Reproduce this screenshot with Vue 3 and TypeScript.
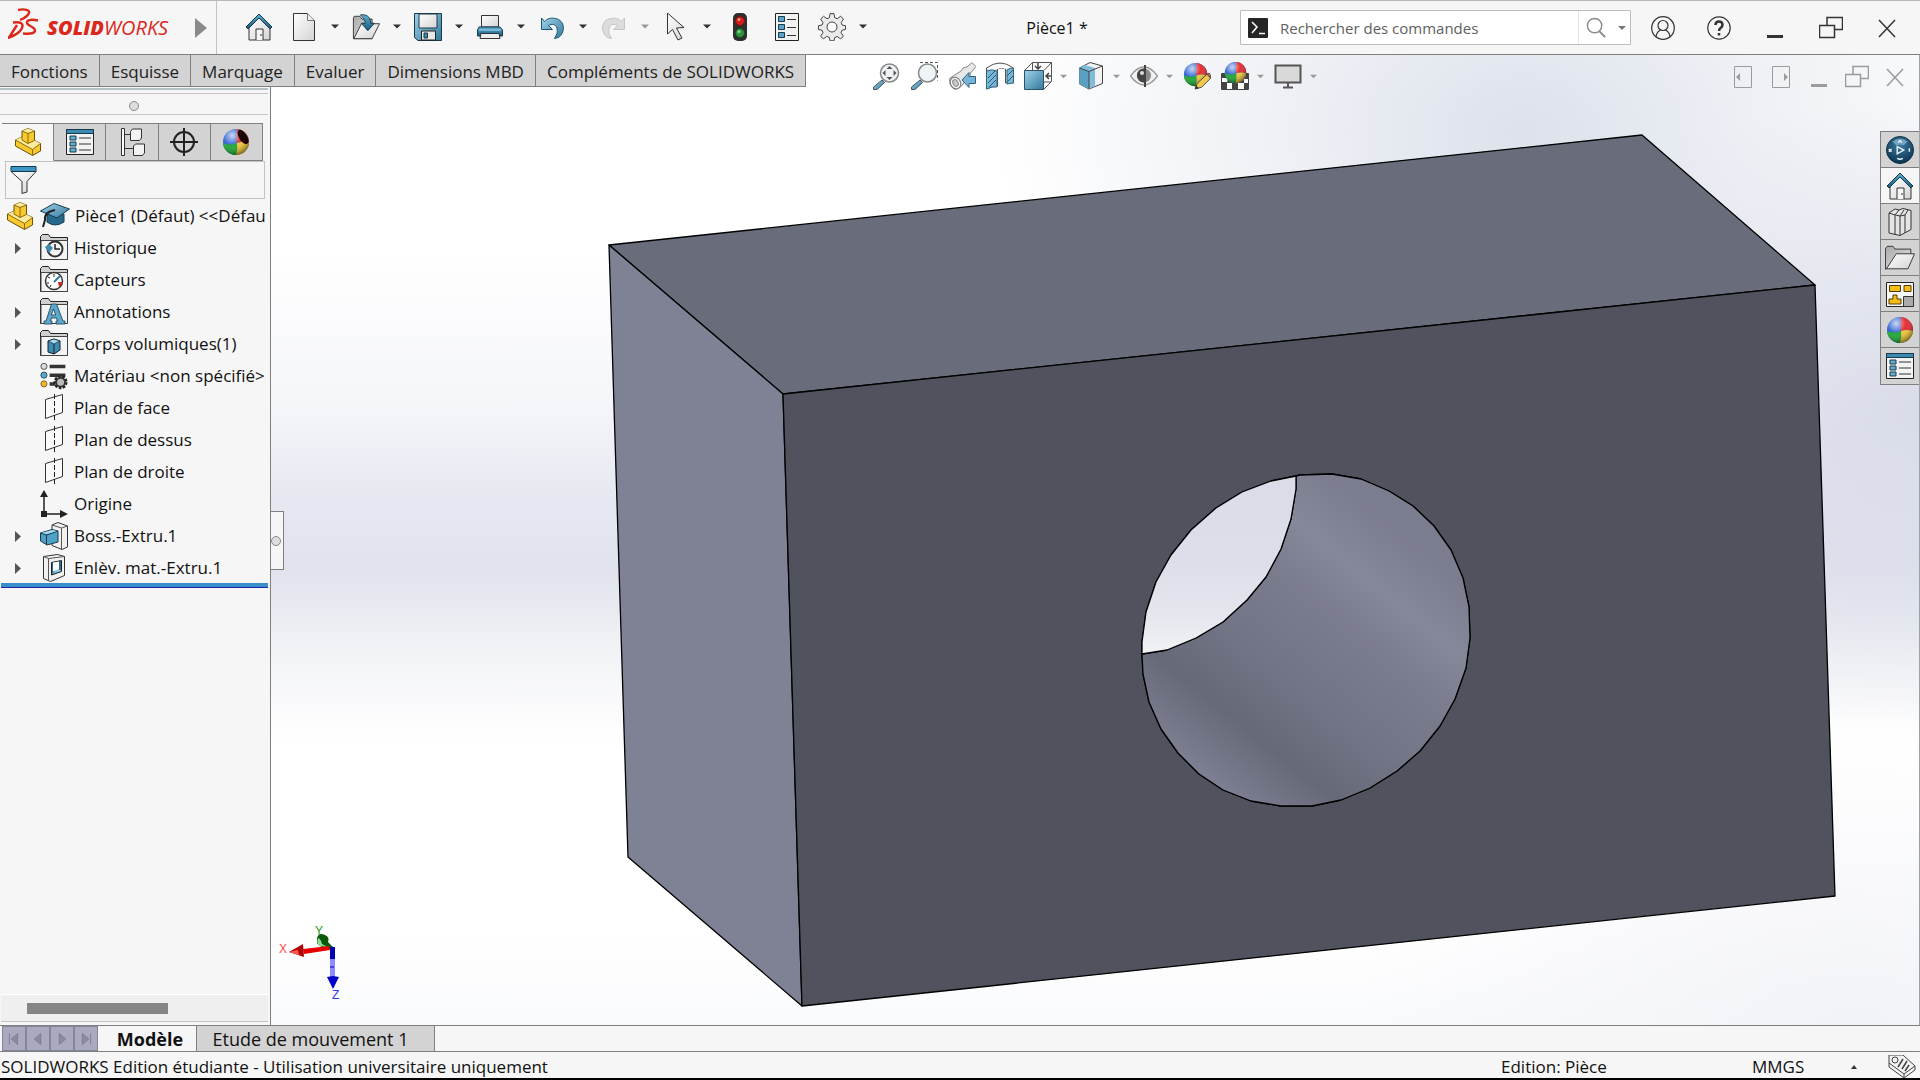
<script setup lang="ts">
import { ref } from 'vue'

interface Tool {
  icon: string
  label: string
  menu?: boolean
  dim?: boolean
}

interface TreeNode {
  icon: string
  label: string
  open?: boolean
}

const query = ref('')
const filter = ref('')

const mainTools: Tool[] = [
  { icon: 'new', label: 'Nouveau', menu: true },
  { icon: 'open', label: 'Ouvrir', menu: true },
  { icon: 'save', label: 'Enregistrer', menu: true },
  { icon: 'print', label: 'Imprimer', menu: true },
  { icon: 'undo', label: 'Annuler', menu: true },
  { icon: 'redo', label: 'Rétablir', menu: true, dim: true },
  { icon: 'pointer', label: 'Sélectionner', menu: true },
]

const commandTabs = ['Fonctions', 'Esquisse', 'Marquage', 'Evaluer', 'Dimensions MBD', 'Compléments de SOLIDWORKS']

const viewTools: Tool[] = [
  { icon: 'zoomfit', label: 'Zoom au mieux' },
  { icon: 'zoomarea', label: 'Zoom fenêtre' },
  { icon: 'prevview', label: 'Vue précédente' },
  { icon: 'section', label: 'Vue en coupe' },
  { icon: 'orient', label: 'Orientation de la vue', menu: true },
  { icon: 'style', label: "Style d'affichage", menu: true },
  { icon: 'eye', label: 'Cacher/Montrer', menu: true },
  { icon: 'appearance', label: "Editer l'apparence" },
  { icon: 'scene', label: 'Appliquer une scène', menu: true },
  { icon: 'monitor', label: "Paramètres d'affichage", menu: true },
]

const panelTabs: Tool[] = [
  { icon: 'part', label: 'Arbre de création' },
  { icon: 'props', label: 'Propriétés' },
  { icon: 'config', label: 'Configurations' },
  { icon: 'target', label: 'DimXpert' },
  { icon: 'display', label: 'Affichage' },
]

const tree: TreeNode[] = [
  { icon: 'history', label: 'Historique', open: true },
  { icon: 'sensor', label: 'Capteurs' },
  { icon: 'annot', label: 'Annotations', open: true },
  { icon: 'solid', label: 'Corps volumiques(1)', open: true },
  { icon: 'material', label: 'Matériau <non spécifié>' },
  { icon: 'plane', label: 'Plan de face' },
  { icon: 'plane', label: 'Plan de dessus' },
  { icon: 'plane', label: 'Plan de droite' },
  { icon: 'origin', label: 'Origine' },
  { icon: 'boss', label: 'Boss.-Extru.1', open: true },
  { icon: 'cut', label: 'Enlèv. mat.-Extru.1', open: true },
]

const taskPane: Tool[] = [
  { icon: 'wheel', label: '3DEXPERIENCE' },
  { icon: 'home', label: 'Ressources' },
  { icon: 'library', label: 'Bibliothèque' },
  { icon: 'folder', label: 'Explorateur' },
  { icon: 'palette', label: 'Palette de vues' },
  { icon: 'ball', label: 'Apparences' },
  { icon: 'props', label: 'Propriétés personnalisées' },
]

const navIcons: Tool[] = [
  { icon: 'first', label: 'Premier' },
  { icon: 'prev', label: 'Précédent' },
  { icon: 'next', label: 'Suivant' },
  { icon: 'last', label: 'Dernier' },
]
</script>

<template>
  <div class="app">
    <svg class="sprite" width="0" height="0" aria-hidden="true">
      <defs>
        <linearGradient id="gBlue" x1="0" y1="0" x2="1" y2="1">
          <stop offset="0" stop-color="#9fd3ea" /><stop offset="1" stop-color="#33789b" />
        </linearGradient>
        <linearGradient id="gDeep" x1="0" y1="0" x2="0" y2="1">
          <stop offset="0" stop-color="#5fb0d2" /><stop offset="1" stop-color="#17577a" />
        </linearGradient>
        <linearGradient id="gGrey" x1="0" y1="0" x2="1" y2="1">
          <stop offset="0" stop-color="#ffffff" /><stop offset="1" stop-color="#d4d4d4" />
        </linearGradient>
        <linearGradient id="gSteel" x1="0" y1="0" x2="1" y2="1">
          <stop offset="0" stop-color="#a9a9a9" /><stop offset="1" stop-color="#e6e6e6" />
        </linearGradient>
        <radialGradient id="gShine" cx="0.35" cy="0.25" r="0.75">
          <stop offset="0" stop-color="#fff" stop-opacity="0.75" />
          <stop offset="0.5" stop-color="#fff" stop-opacity="0.05" />
          <stop offset="1" stop-color="#000" stop-opacity="0.4" />
        </radialGradient>
        <radialGradient id="gWheel" cx="0.5" cy="0.3" r="0.7">
          <stop offset="0" stop-color="#3f7da3" /><stop offset="1" stop-color="#0b3350" />
        </radialGradient>
      </defs>

      <symbol id="home" viewBox="0 0 28 28">
        <path d="M4 13v14h21V13L14 4z" fill="url(#gGrey)" stroke="#333" />
        <path d="M1 14 14 1l13 13-2 2L14 5 3 16z" fill="url(#gDeep)" stroke="#173a4c" />
        <path d="M11 27V16h7v11M16 21v2" fill="#f6f6f6" stroke="#333" />
      </symbol>
      <symbol id="new" viewBox="0 0 28 28">
        <path d="M3.5.5h14l7 7v20h-21z" fill="url(#gGrey)" stroke="#333" />
        <path d="M17.500.5v7h7" fill="#eee" stroke="#777" />
      </symbol>
      <symbol id="open" viewBox="0 0 30 28">
        <path d="M1.500 26.500V4.500l1-2h6l2 3h11v21z" fill="url(#gSteel)" stroke="#333" />
        <path d="M2 26.500 10 10.500h19.500l-8 16z" fill="url(#gGrey)" stroke="#333" />
        <path d="M9 1c6-1 11 2 11 9h4l-7 8-7-8h4c0-3-1-5-5-9z" fill="url(#gDeep)" stroke="#173a4c" />
      </symbol>
      <symbol id="save" viewBox="0 0 28 28">
        <path d="M.5.5h27v27H4l-3.500-3z" fill="url(#gBlue)" stroke="#173a4c" />
        <path d="M5 1h18v14H5z" fill="url(#gGrey)" stroke="#173a4c" />
        <path d="M7.500 27v-9h14v9z" fill="#e8e8e8" stroke="#222" />
        <path d="M10 20h3.500v5H10z" fill="#3f86a9" stroke="#173a4c" />
      </symbol>
      <symbol id="print" viewBox="0 0 28 28">
        <path d="M5.500 14V2.500h17V14z" fill="url(#gGrey)" stroke="#333" />
        <path d="M3 14h21l2.500 3v6h-25v-6z" fill="url(#gDeep)" stroke="#173a4c" />
        <path d="M3 17h22" stroke="#a9dcf0" /><path d="M5 20.500h18l1 5H4z" fill="#eee" stroke="#333" />
      </symbol>
      <symbol id="undo" viewBox="0 0 28 28">
        <path d="M3.500 5v11.500h11l-4-4c5-3 10 0 8.500 8l-2.500 5 4-1c7-5 7-17-3-19-5-1-8 0-11 3z" fill="url(#gBlue)" stroke="#1e5672" />
      </symbol>
      <symbol id="redo" viewBox="0 0 28 28">
        <path d="M24.500 5v11.500h-11l4-4c-5-3-10 0-8.500 8l2.500 5-4-1c-7-5-7-17 3-19 5-1 8 0 11 3z" fill="#dcdcdc" stroke="#c4c4c4" />
      </symbol>
      <symbol id="pointer" viewBox="0 0 28 28">
        <path d="M5.500 0v21l5-4.500 5.500 10.500 4-2-5.500-10 7.500-.5z" fill="url(#gGrey)" stroke="#333" />
      </symbol>
      <symbol id="traffic" viewBox="0 0 28 28">
        <rect x="7" y="0" width="14" height="28" rx="5" fill="#2e2e2e" />
        <circle cx="14" cy="8" r="4.500" fill="#d2201c" stroke="#7a1210" /><circle cx="14" cy="20" r="4.500" fill="#2f9440" stroke="#14521e" />
        <circle cx="13" cy="6.500" r="1.500" fill="#f08a84" /><circle cx="13" cy="18.500" r="1.500" fill="#8ed093" />
      </symbol>
      <symbol id="list" viewBox="0 0 28 28">
        <path d="M2.500.5h23v27h-23z" fill="#f2f2f2" stroke="#222" />
        <path d="M5.500 3.500h6v5h-6zM5.500 11.500h6v5h-6zM5.500 19.500h6v5h-6z" fill="#5aa5c8" stroke="#173a4c" />
        <path d="M14 6.500h9M14 14.500h9M14 22.500h9" stroke="#333" />
      </symbol>
      <symbol id="gear" viewBox="0 0 28 28">
        <path d="M12 .7h4l.7 4 2.500 1 3.500-2.400 2.800 2.800-2.300 3.500 1 2.500 3.300.6v3.800l-3.500.8-1 2.400 2.400 3.400-2.800 2.800-3.400-2.400-2.500 1-.7 3.300h-4l-.7-3.400-2.500-1-3.400 2.500-2.800-2.800L5 19.700l-1-2.400-3.500-.8v-3.800L4 12l1-2.500-2.300-3.400 2.800-2.800L9 5.700l2.400-1z" fill="#eaeaea" stroke="#444" />
        <circle cx="14" cy="14" r="5" fill="#fff" stroke="#444" />
      </symbol>
      <symbol id="caret" viewBox="0 0 8 5"><path d="M0 .5h8L4 4.500z" fill="currentColor" /></symbol>

      <symbol id="glass" viewBox="0 0 28 28">
        <path d="m10 18 2.500 2.500L5 27.500H1.500V25z" fill="url(#gBlue)" stroke="#456" />
        <circle cx="17.500" cy="11" r="9" fill="#eef3f6" stroke="#888" stroke-width="1.500" />
      </symbol>
      <symbol id="zoomfit" viewBox="0 0 28 28">
        <use href="#glass" /><path d="M17.500 4l3 3h-6zM17.500 18l3-3h-6zM10.500 11l3-3v6zM24.500 11l-3-3v6z" fill="#555" />
      </symbol>
      <symbol id="zoomarea" viewBox="0 0 28 28">
        <use href="#glass" /><path d="M10 .5h17.500v18" fill="none" stroke="#555" stroke-dasharray="3 2" />
      </symbol>
      <symbol id="prevview" viewBox="0 0 28 28">
        <path d="M2 16 13 9l2-3 4-1 5-4.500 4 4-5 6-1 3-9 11-6 3q-7-4-5-11.500z" fill="#e8e8e8" stroke="#888" />
        <ellipse cx="7.500" cy="21" rx="5" ry="6" fill="#f8f8f8" stroke="#777" transform="rotate(-30 7.500 21)" /><ellipse cx="7.500" cy="21" rx="2.500" ry="3.500" fill="#c9c9c9" stroke="#888" transform="rotate(-30 7.500 21)" />
        <path d="M27.500 14.500v7H21v4l-7-7.500 7-7.500v4z" fill="#77b5d6" stroke="#2e6583" />
      </symbol>
      <symbol id="section" viewBox="0 0 28 28">
        <path d="M.5 6q13.500-10 27 0v15q-3-2-8 0V7q-4-2-8 0v17q-4 0-11 3z" fill="#e4e4e4" stroke="#555" />
        <path d="M1 7q13-10 26 0-6-2-8 0-3-2-7 0-6-1-11 0z" fill="#fff" />
        <path d="M.5 9q5-2 10.500 0v16q-5-1-10.500 2z" fill="#7ab7d6" stroke="#2e6583" /><path d="M21 8q3-2 6.500-2v15l-6.500 1z" fill="#7ab7d6" stroke="#2e6583" />
        <path d="m2 16 7-7M2 21l8-8M3 25l7-7M21 14l6-6M21 20l6-6" stroke="#245b78" />
      </symbol>
      <symbol id="orient" viewBox="0 0 28 28">
        <path d="M.5 8.500 8.500.5h19v19l-8 8M8.500.5v8M20 8.500l7.500-8M20 20h7" fill="none" stroke="#555" />
        <path d="M.5 8.500h19v19H.5z" fill="url(#gBlue)" stroke="#2e5163" /><path d="M14 1v6m-3-3 3 3 3-3M27 14h-5m3-3-3 3 3 3" fill="none" stroke="#444" stroke-width="1.500" />
      </symbol>
      <symbol id="style" viewBox="0 0 28 28">
        <path d="M2.500 6 13 .5 25.500 4v17.500L12 27 2.500 22z" fill="#f3f3f3" stroke="#444" />
        <path d="M2.500 6 8 3l10 3v18l-6 3-9.500-5z" fill="#7fbddb" /><path d="M2.500 6 12 9.500V27l-9.500-5z" fill="#5b9fc2" /><path d="M2.500 6 12 9.500 25.500 4M12 9.500V27" fill="none" stroke="#444" />
      </symbol>
      <symbol id="eye" viewBox="0 0 28 28">
        <path d="M.5 14Q7 5 14 5t13.500 9Q21 23 14 23T.5 14z" fill="#f1f1f1" stroke="#999" stroke-width="1.500" />
        <circle cx="14" cy="13.500" r="7" fill="#8a8a8a" /><path d="M14 6.500a7 7 0 0 0 0 14z" fill="#444" /><path d="M15 3v22" stroke="#444" stroke-width="2" /><circle cx="12" cy="11" r="2" fill="#ddd" />
      </symbol>
      <symbol id="ball" viewBox="0 0 28 28">
        <circle cx="14" cy="14" r="13" fill="#2a5fd0" /><path d="M15 1a13 13 0 0 1 12 14q-6-2-12 0-1-7 0-14z" fill="#e0262b" />
        <path d="M1 15q7 3 14 0 1 6-1 12A13 13 0 0 1 1 15z" fill="#18a52c" /><path d="M15 15q6-2 12 0a13 13 0 0 1-13 12q2-6 1-12z" fill="#f2c732" />
        <circle cx="14" cy="14" r="13" fill="url(#gShine)" />
      </symbol>
      <symbol id="appearance" viewBox="0 0 30 30">
        <use href="#ball" width="27" height="27" />
        <path d="m13 29 2-6L26 13l4 4-10 10z" fill="#f1c84b" stroke="#444" /><path d="m26 13 2-1 2 3-1 2z" fill="#d96a64" stroke="#444" /><path d="m13 29 1-4 3 3z" fill="#333" />
      </symbol>
      <symbol id="scene" viewBox="0 0 28 28">
        <path d="M.5 11.500h27v16H.5z" fill="#fff" stroke="#444" /><path d="M1 12h6v4H1zM7 16h4v5H6zM1 20h5v7H1zM11 21h6v6h-6zM21 12h6v5h-6zM18 17h5v4h-5zM23 21h4v6h-4z" fill="#444" />
        <use href="#ball" x="3" y="-1" width="23" height="23" />
      </symbol>
      <symbol id="monitor" viewBox="0 0 28 28">
        <path d="M1.500 3.500h25v17h-25z" fill="#d9d9d9" stroke="#555" stroke-width="2" /><path d="M14 21v4M9 25.500h10" stroke="#555" stroke-width="2" />
      </symbol>

      <symbol id="part" viewBox="0 0 28 28">
        <path d="M8 3 14 .5 20.500 3v9.500l6 3V23l-8 4.500L1.500 18v-6L8 9z" fill="#f8c92c" stroke="#6b5208" />
        <path d="M8 3 14 .5 20.500 3 14 5.500zM1.500 12 8 9v3l6 3.500 6.500-3 6 3-8 6z" fill="#fdeb9c" />
        <path d="M8 3l6 2.500L20.500 3M14 5.500v10l6.500-3M8 9v3l6 3.500M1.500 12l17 9.500 8-6M18.500 21.500v6" stroke="#8a6a10" fill="none" />
      </symbol>
      <symbol id="props" viewBox="0 0 28 28">
        <path d="M.5 1.500h27v25H.5z" fill="#f3f3f3" stroke="#222" /><path d="M.5 1.500h27v4H.5z" fill="#3c8ab0" stroke="#173a4c" />
        <path d="M4 8h6v4H4zM4 14h6v4H4zM4 20h6v4H4z" fill="#62aed0" stroke="#173a4c" /><path d="M13 10h12M13 16h12M13 22h12" stroke="#333" />
      </symbol>
      <symbol id="config" viewBox="0 0 28 28">
        <path d="M3.500.5v27M3.500.5h3v27h-3M6.500 6.500H12M6.500 20.500H15" fill="#fff" stroke="#333" /><path d="M12.500 3.500 14.500 1h9v9l-2 2.500h-9zM15.500 18l2-2h9v9l-2 2.500h-9z" fill="#f3f3f3" stroke="#333" />
      </symbol>
      <symbol id="target" viewBox="0 0 28 28">
        <circle cx="14" cy="14" r="10" fill="none" stroke="#222" stroke-width="2" /><path d="M14 0v28M0 14h28" stroke="#222" stroke-width="2" />
      </symbol>
      <symbol id="display" viewBox="0 0 28 28">
        <use href="#ball" /><ellipse cx="21" cy="9" rx="4" ry="8" fill="#1a0505" transform="rotate(-32 21 9)" />
      </symbol>
      <symbol id="funnel" viewBox="0 0 28 28">
        <path d="M1 5.500h25l-9 10V26l-5 1.500v-12z" fill="url(#gGrey)" stroke="#333" /><path d="M1 .5h25v5H1z" fill="#3c96c4" stroke="#12384c" />
      </symbol>
      <symbol id="hat" viewBox="0 0 30 28">
        <path d="M7 12v8q8 6 17 0v-8z" fill="#26698c" stroke="#163c50" /><path d="M.5 9 14 1.500 29.500 7 17 16z" fill="url(#gBlue)" stroke="#163c50" />
        <path d="M15 8Q4 10 5 18l-2 7" fill="none" stroke="#222" stroke-width="2" />
      </symbol>

      <symbol id="treefolder" viewBox="0 0 28 28">
        <path d="M.5 25.500v-23l2-2h6l2 3h17v22z" fill="#d0d0d0" stroke="#222" /><path d="M1 6.500h26.500v19H1z" fill="#f4f4f4" stroke="#444" />
      </symbol>
      <symbol id="history" viewBox="0 0 28 28">
        <use href="#treefolder" /><circle cx="15" cy="15" r="7.500" fill="#f4f4f4" stroke="#333" stroke-width="2" />
        <path d="M15 10v5h5" fill="none" stroke="#222" stroke-width="1.500" /><path d="m5 13 4-3 4 4-4 5z" fill="#3d8bb0" />
      </symbol>
      <symbol id="sensor" viewBox="0 0 28 28">
        <use href="#treefolder" /><circle cx="14" cy="15" r="8.500" fill="#fff" stroke="#333" stroke-width="1.500" />
        <path d="M8 11l2 1M14 8v3M7 17h2M10 21l1-2" stroke="#222" /><path d="m14 16 6-6" stroke="#2c7da5" stroke-width="2" /><path d="M18 16h4q0 3-3 5z" fill="#d22" />
      </symbol>
      <symbol id="annot" viewBox="0 0 28 28">
        <use href="#treefolder" /><path d="M11.500 6h5l6.500 17h2v3h-9v-3h1.500l-1-3h-5l-1 3H12v3H4v-3h2zm2 5-2.200 6h4.400z" fill="#5aa8cc" stroke="#173a4c" stroke-width=".8" />
      </symbol>
      <symbol id="solid" viewBox="0 0 28 28">
        <use href="#treefolder" /><path d="m8 11 6-2 6 2v9l-6 4-6-2z" fill="#3f8bb0" stroke="#123" /><path d="m8 11 6-2 6 2-6 3z" fill="#a6d9ee" stroke="#123" stroke-width=".7" /><path d="M14 14v10" stroke="#123" />
      </symbol>
      <symbol id="material" viewBox="0 0 32 30">
        <path d="M11 4h18M11 14h18M11 24h8" stroke="#333" stroke-width="4" />
        <circle cx="4.500" cy="4" r="3.500" fill="#ddd" stroke="#444" /><circle cx="4.500" cy="14" r="3.500" fill="#5aa8cc" stroke="#245" /><circle cx="4.500" cy="24" r="3.500" fill="#f0b91d" stroke="#754" />
        <circle cx="23.500" cy="22" r="6.500" fill="#bbb" stroke="#222" stroke-width="3" stroke-dasharray="3 1.500" /><circle cx="23.500" cy="22" r="5" fill="none" stroke="#333" stroke-width="2" />
      </symbol>
      <symbol id="plane" viewBox="0 0 28 28">
        <path d="M5.500 5.500 22.500.5v18l-17 6z" fill="#fafafa" stroke="#333" /><path d="M14.500 0v28" stroke="#222" stroke-dasharray="5 2" />
      </symbol>
      <symbol id="origin" viewBox="0 0 28 28">
        <path d="M4 5v19h18" fill="none" stroke="#222" stroke-width="1.500" /><path d="M0 7 4 0l4 7zM20 20l8 4-8 4zM1 21h6v6H1z" fill="#222" />
      </symbol>
      <symbol id="boss" viewBox="0 0 28 28">
        <path d="m12 3 6-2.500L27.500 4v21L22 27.500l-10-4z" fill="#f1f1f1" stroke="#333" /><path d="M21.500 6v21M12 3l9.500 3 6-2" fill="none" stroke="#555" />
        <path d="M.5 11 12 7.500 18 9v11l-11 3-6.500-4z" fill="#4fa0c6" stroke="#173a4c" /><path d="m.5 11 6 2L18 9M6.500 13v10" fill="none" stroke="#173a4c" /><path d="M1.500 11 12 8l5 1L7 12z" fill="#a8dcf0" />
      </symbol>
      <symbol id="cut" viewBox="0 0 28 28">
        <path d="m3.500 2.500 14-2 7 2v19l-14 6-7-3z" fill="#f1f1f1" stroke="#333" /><path d="M8.500 4.500 24.500 2.500M8.500 4.500v22M3.500 2.500l5 2" fill="none" stroke="#555" />
        <path d="m11.500 8.500 10-2v11l-10 3.500z" fill="#2a6c8f" stroke="#222" /><path d="m13 8.500 6-1v8l-6 2z" fill="#fff" /><path d="m12 20 4-4h5v1z" fill="#8fcbe4" />
      </symbol>

      <symbol id="wheel" viewBox="0 0 30 30">
        <circle cx="15" cy="15" r="14.500" fill="url(#gWheel)" stroke="#0c2c42" /><path d="M7 6q8-6 16 0l-4 4q-4-2-8 0z" fill="#75a5c2" />
        <path d="m12 11.500 7 3.500-7 4zM13 7l2-2 2 2M3 14l3 3m0-3-3 3M25 13v4M12 24q3 2 6 0" fill="none" stroke="#e8f4fa" stroke-width="1.500" />
      </symbol>
      <symbol id="library" viewBox="0 0 28 28">
        <path d="M3 5 9 1l4 1 4-1.500 4 1 4 1v19L14 27.500 3 25z" fill="#e4e4e4" stroke="#333" /><path d="M3 5l6 2v19.500M9 7l4-5M9.500 7 14 8v19M14 8l4-6M14.500 8 19 7v18M19 7l3-5" fill="none" stroke="#333" />
      </symbol>
      <symbol id="folder" viewBox="0 0 32 28">
        <path d="M.5 26V4l2-2.500h6l2 3h17V10z" fill="url(#gSteel)" stroke="#333" /><path d="M1.500 25.500 12 9.500h19.500l-7 16z" fill="url(#gGrey)" stroke="#333" />
      </symbol>
      <symbol id="palette" viewBox="0 0 28 28">
        <path d="M.5 2.500h27v24H.5z" fill="#f8f8f8" stroke="#222" /><path d="M3.500 5.500h11v6h-11zM18 5.500h7v6h-7zM7 15h4v4h4v5H3v-5h4z" fill="#f7bd16" stroke="#4a3a08" />
        <path d="M17.500 16.500h10v10h-10z" fill="#aaa" stroke="#333" />
      </symbol>
      <symbol id="first" viewBox="0 0 24 24"><path d="M7 6v12M16 6v12l-7-6z" fill="#8b8b9e" stroke="#7d7d92" /></symbol>
      <symbol id="prev" viewBox="0 0 24 24"><path d="M15 6v12l-7-6z" fill="#8b8b9e" stroke="#7d7d92" /></symbol>
      <symbol id="next" viewBox="0 0 24 24"><path d="M9 6v12l7-6z" fill="#8b8b9e" stroke="#7d7d92" /></symbol>
      <symbol id="last" viewBox="0 0 24 24"><path d="M17 6v12M8 6v12l7-6z" fill="#8b8b9e" stroke="#7d7d92" /></symbol>

      <symbol id="minimise" viewBox="0 0 24 24"><path d="M4 19h16v3H4z" fill="currentColor" /></symbol>
      <symbol id="restore" viewBox="0 0 24 24"><path d="M.5 9.500h15v12H.5zM8 9V1.500h15.500v12H16" fill="none" stroke="currentColor" stroke-width="1.500" /></symbol>
      <symbol id="close" viewBox="0 0 24 24"><path d="m4 4 16 17M20 4 4 21" stroke="currentColor" stroke-width="1.500" /></symbol>
      <symbol id="panel-left" viewBox="0 0 24 24"><path d="M3.500 1.500h17v21h-17z" fill="none" stroke="currentColor" /><path d="M9 8v8l-4-4z" fill="currentColor" /></symbol>
      <symbol id="panel-right" viewBox="0 0 24 24"><path d="M3.500 1.500h17v21h-17z" fill="none" stroke="currentColor" /><path d="M15 8v8l4-4z" fill="currentColor" /></symbol>
    </svg>

    <header class="topbar">
      <div class="brand">
        <svg class="ds" viewBox="0 0 31 31" fill="none" stroke="#da291c" stroke-width="2.400" aria-hidden="true">
          <path d="M10 2c7-1.500 12 0 11 3-1 2.500-4 5-9 7" />
          <path d="M5 14.500c7-1 11 .5 9 5.500-1.500 4-6 7-13 9.500L9 17" />
          <path d="M30 12.500c-7-1.500-11.500-.5-11 2.500.6 3 9 4 8 8-1 3-6 3-12 2.500" />
        </svg>
        <span class="wordmark"><b>SOLID</b>WORKS</span>
        <button class="expand" aria-label="Menu"><svg viewBox="0 0 12 20"><path d="m0 0 12 10L0 20z" fill="#8a8a8a" /></svg></button>
      </div>

      <div class="tools">
        <button class="tool home" aria-label="Accueil"><svg><use href="#home" /></svg></button>
        <div v-for="t in mainTools" :key="t.icon" class="group" :class="{ dim: t.dim }">
          <button class="tool" :aria-label="t.label"><svg><use :href="'#' + t.icon" /></svg></button>
          <button class="drop" :aria-label="t.label + ' : options'"><svg><use href="#caret" /></svg></button>
        </div>
        <button class="tool traffic" aria-label="Reconstruire"><svg><use href="#traffic" /></svg></button>
        <button class="tool spaced" aria-label="Propriétés du fichier"><svg><use href="#list" /></svg></button>
        <div class="group spaced">
          <button class="tool" aria-label="Options"><svg><use href="#gear" /></svg></button>
          <button class="drop" aria-label="Options : menu"><svg><use href="#caret" /></svg></button>
        </div>
      </div>

      <div class="title">Pièce1 *</div>

      <div class="search">
        <svg class="prompt" viewBox="0 0 20 20" aria-hidden="true">
          <rect width="20" height="20" rx="1" fill="#262626" /><path d="m4 4 5 5-5 6M11 15.500h6" fill="none" stroke="#fff" stroke-width="1.500" />
        </svg>
        <input v-model="query" type="text" placeholder="Rechercher des commandes" aria-label="Rechercher des commandes" />
        <button class="find" aria-label="Rechercher">
          <svg viewBox="0 0 22 22"><circle cx="9" cy="9" r="7.500" fill="none" stroke="#8a8a8a" stroke-width="1.500" /><path d="m14 15 6 6" stroke="#8a8a8a" stroke-width="2" /></svg>
        </button>
        <button class="find-drop" aria-label="Options de recherche"><svg><use href="#caret" /></svg></button>
      </div>

      <div class="window">
        <button aria-label="Connexion">
          <svg viewBox="0 0 24 24" fill="none" stroke="#333" stroke-width="1.200"><circle cx="12" cy="12" r="11.300" /><circle cx="12" cy="9.500" r="5" /><path d="M5 20.500q1-5 4.500-6.500M19 20.500q-1-5-4.500-6.500" /></svg>
        </button>
        <button aria-label="Aide">
          <svg viewBox="0 0 24 24" fill="none" stroke="#333"><circle cx="12" cy="12" r="11.200" stroke-width="1.200" /><path d="M8.500 9q0-3.500 3.500-3.500T15.500 9c0 3-3.500 2.500-3.500 6M12 17v2.500" stroke-width="2.500" /></svg>
        </button>
        <button aria-label="Réduire"><svg><use href="#minimise" /></svg></button>
        <button aria-label="Restaurer"><svg><use href="#restore" /></svg></button>
        <button aria-label="Fermer"><svg><use href="#close" /></svg></button>
      </div>
    </header>

    <main class="work">
      <nav class="commands">
        <button v-for="c in commandTabs" :key="c">{{ c }}</button>
      </nav>

      <aside class="panel">
        <div class="grip"><span class="dot"></span></div>
        <div class="panel-tabs">
          <button v-for="(t, i) in panelTabs" :key="t.icon" :class="{ active: i === 0 }" :aria-label="t.label">
            <svg><use :href="'#' + t.icon" /></svg>
          </button>
        </div>
        <label class="filter">
          <svg aria-hidden="true"><use href="#funnel" /></svg>
          <input v-model="filter" type="text" aria-label="Filtrer l'arbre" />
        </label>
        <div class="root">
          <svg class="root-part"><use href="#part" /></svg>
          <svg class="root-hat"><use href="#hat" /></svg>
          <span>Pièce1 (Défaut) &lt;&lt;Défau</span>
        </div>
        <ul class="tree">
          <li v-for="n in tree" :key="n.label">
            <span class="arrow"><svg v-if="n.open" viewBox="0 0 6 11"><path d="m0 0 6 5.500L0 11z" fill="#555" /></svg></span>
            <svg class="node"><use :href="'#' + n.icon" /></svg>
            <span>{{ n.label }}</span>
          </li>
        </ul>
        <div class="rollback"></div>
        <div class="hscroll"><div class="thumb"></div></div>
      </aside>

      <section class="view">
        <svg class="model" viewBox="271 55 1648 970" preserveAspectRatio="xMidYMid slice" aria-label="Pièce1">
          <defs>
            <linearGradient id="bore" gradientUnits="userSpaceOnUse" x1="1426" y1="493" x2="1199" y2="772">
              <stop offset="0" stop-color="#7a7c8f" /><stop offset=".14" stop-color="#7c7e90" /><stop offset=".29" stop-color="#858899" />
              <stop offset=".42" stop-color="#7b7d8e" /><stop offset=".65" stop-color="#717485" /><stop offset=".82" stop-color="#666977" /><stop offset="1" stop-color="#7d7f92" />
            </linearGradient>
            <linearGradient id="through" gradientUnits="userSpaceOnUse" x1="0" y1="480" x2="0" y2="654">
              <stop offset="0" stop-color="#dadde7" /><stop offset=".5" stop-color="#dcdee9" /><stop offset=".8" stop-color="#e6e8ef" /><stop offset="1" stop-color="#f1f2f5" />
            </linearGradient>
          </defs>
          <g stroke="#000" stroke-width="1.300" stroke-linejoin="round">
            <path d="M609 245 1642 135 1815 285 783 394z" fill="#696c7b" />
            <path d="M609 245 783 394 802 1006 628 857z" fill="#7f8194" />
            <path fill-rule="evenodd" fill="#50525d" d="M783 394 1815 285 1835 896 802 1006zM1142 654 1142 642 1146 612 1156 582 1171 555 1191 530 1216 508 1242 492 1271 481 1300 475 1332 474 1361 479 1389 491 1413 506 1434 526 1451 550 1463 578 1469 607 1470 638 1466 668 1455 699 1440 726 1420 751 1397 771 1370 788 1341 800 1312 806 1281 806 1251 801 1223 790 1199 774 1178 753 1161 729 1149 702 1143 674z" />
            <path fill="url(#bore)" d="M1296 476 1300 475 1332 474 1361 479 1389 491 1413 506 1434 526 1451 550 1463 578 1469 607 1470 638 1466 668 1455 699 1440 726 1420 751 1397 771 1370 788 1341 800 1312 806 1281 806 1251 801 1223 790 1199 774 1178 753 1161 729 1149 702 1143 674 1142 654 1167 650 1196 638 1223 622 1247 600 1266 577 1281 549 1291 519 1296 489z" />
            <path fill="url(#through)" d="M1142 654 1142 642 1146 612 1156 582 1171 555 1191 530 1216 508 1242 492 1271 481 1296 476 1296 489 1291 519 1281 549 1266 577 1247 600 1223 622 1196 638 1167 650z" />
          </g>
        </svg>

        <svg class="triad" viewBox="275 920 70 85" aria-hidden="true">
          <path d="M317 938q2-6 8-3 5 2 3 7l6 6-5 1q-9-1-12-6z" fill="#0b5a0b" /><path d="M318 938q3 1 4 6l6 3-8-1q-4-3-2-8z" fill="#8fdc9a" />
          <path d="m303 949 26-3 1 4-26 4z" fill="#e80000" /><path d="m289 952 14-8 1 13z" fill="#b30000" /><path d="m289 952 9-2 1 5z" fill="#ff5a5a" />
          <path d="M330 948h5v30h-5z" fill="#8d8dff" /><path d="M330 947h5v12h-5z" fill="#0000b0" /><path d="M330 967h4" stroke="#0000c8" /><path d="m327 977 6-1 6 1-6 12z" fill="#0000c8" />
          <text x="279" y="953" fill="#ff4848">X</text><text x="315" y="935" fill="#1f9c1f">Y</text><text x="332" y="999" fill="#3030ff">Z</text>
        </svg>

        <div class="hud">
          <div v-for="t in viewTools" :key="t.icon" class="hud-item">
            <button class="tool" :aria-label="t.label"><svg><use :href="'#' + t.icon" /></svg></button>
            <button v-if="t.menu" class="hud-drop" :aria-label="t.label + ' : options'"><svg><use href="#caret" /></svg></button>
          </div>
        </div>

        <div class="doc-window">
          <button aria-label="Volet gauche"><svg><use href="#panel-left" /></svg></button>
          <button aria-label="Volet droit"><svg><use href="#panel-right" /></svg></button>
          <button aria-label="Réduire le document"><svg><use href="#minimise" /></svg></button>
          <button aria-label="Restaurer le document"><svg><use href="#restore" /></svg></button>
          <button aria-label="Fermer le document"><svg><use href="#close" /></svg></button>
        </div>

        <div class="task-pane">
          <button v-for="(t, i) in taskPane" :key="t.icon" :class="{ active: i === 1 }" :aria-label="t.label">
            <svg><use :href="'#' + t.icon" /></svg>
          </button>
        </div>

        <button class="splitter" aria-label="Réduire le volet"><span class="dot"></span></button>
      </section>
    </main>

    <div class="sheets">
      <div class="sheet-nav">
        <button v-for="n in navIcons" :key="n.icon" :aria-label="n.label"><svg><use :href="'#' + n.icon" /></svg></button>
      </div>
      <button class="sheet current">Modèle</button>
      <button class="sheet study">Etude de mouvement 1</button>
    </div>

    <footer class="status">
      <span class="edition">SOLIDWORKS Edition étudiante - Utilisation universitaire uniquement</span>
      <span class="mode">Edition: Pièce</span>
      <button class="units">MMGS<svg viewBox="0 0 6 4"><path d="M0 4h6L3 0z" fill="#333" /></svg></button>
      <button class="tag" aria-label="Balises">
        <svg viewBox="0 0 28 24" fill="#f2f2f2" stroke="#444"><path d="M1 0h14l12 11v4L16 23 1 12z" /><path d="m1 8 15 11 11-8M16 19v4" fill="none" /><circle cx="7" cy="5" r="3" /><path d="m10 12 5-8M14 14l5-8M17 16l4-6" stroke-width="1.500" /></svg>
      </button>
    </footer>
  </div>
</template>

<style>
body {
  margin: 0;
}
</style>

<style scoped>
.app {
  min-height: 100vh;
  display: flex;
  flex-direction: column;
  box-sizing: border-box;
  border-bottom: 2px solid #000;
  background: #f6f6f6;
  color: #111;
  font: 17px/24px "Open Sans", "Noto Sans", sans-serif;
}
.sprite {
  position: absolute;
}
button {
  display: flex;
  align-items: center;
  justify-content: center;
  padding: 0;
  border: 0;
  background: none;
  color: inherit;
  font: inherit;
  white-space: nowrap;
}
input {
  flex: 1;
  min-width: 0;
  padding: 0;
  border: 0;
  outline: 0;
  background: none;
  font: inherit;
}

.topbar {
  display: flex;
  align-items: center;
  height: 53px;
  border-top: 1px solid #b9b9b9;
  border-bottom: 1px solid #7f7f7f;
  background: #f6f6f6;
}
.brand {
  display: flex;
  align-items: center;
  box-sizing: border-box;
  width: 217px;
  height: 100%;
  padding: 0 9px 0 8px;
  border-right: 1px solid #c3c3c3;
}
.ds {
  width: 31px;
  height: 31px;
  margin-bottom: 8px;
}
.wordmark {
  margin-left: 8px;
  color: #da291c;
  font: italic 20px/24px "Open Sans", sans-serif;
}
.wordmark b {
  font-weight: 800;
}
.expand {
  margin-left: auto;
}
.expand svg {
  width: 12px;
  height: 20px;
}
.tools {
  display: flex;
  align-items: center;
  padding: 0 0 2px 28px;
}
.tool,
.tool svg {
  width: 28px;
  height: 28px;
}
.home {
  margin-right: 17px;
}
.group {
  display: flex;
}
.drop {
  width: 34px;
  height: 28px;
  color: #333;
}
.drop svg {
  width: 8px;
  height: 5px;
}
.dim .drop {
  color: #999;
}
.traffic {
  width: 32px;
}
.spaced {
  margin-left: 17px;
}
.title {
  flex: 1;
  padding-right: 6px;
  text-align: center;
  font-size: 16px;
}
.search {
  display: flex;
  align-items: center;
  box-sizing: border-box;
  width: 391px;
  height: 35px;
  padding-left: 7px;
  border: 1px solid #bcbcbc;
  border-radius: 1px;
  background: #fff;
  font-size: 15px;
}
.search input {
  margin-left: 12px;
}
.search input::placeholder {
  color: #606060;
  opacity: 1;
}
.prompt {
  width: 20px;
  height: 20px;
}
.find {
  width: 35px;
  height: 33px;
  border-left: 1px solid #e4e4e4;
}
.find svg {
  width: 21px;
  height: 21px;
}
.find-drop {
  width: 17px;
  height: 33px;
  color: #777;
}
.find-drop svg {
  width: 8px;
  height: 6px;
}
.window {
  display: flex;
  gap: 32px;
  padding: 0 21px 0 20px;
  color: #333;
}
.window svg,
.doc-window svg {
  width: 24px;
  height: 24px;
}

.work {
  flex: 1;
  display: grid;
  grid-template-columns: 271px minmax(0, 1fr);
  grid-template-rows: 32px minmax(0, 1fr);
}
.commands {
  grid-area: 1 / 1 / 2 / 3;
  z-index: 1;
  justify-self: start;
  display: flex;
  background: #d3d3d3;
}
.commands button {
  padding: 2px 11px 0;
  border-right: 1px solid #7f7f7f;
  border-bottom: 1px solid #7f7f7f;
  color: #222;
}
.panel {
  grid-area: 2 / 1 / 3 / 2;
  display: flex;
  flex-direction: column;
  border-right: 1px solid #7f7f7f;
  background: #f6f6f6;
}
.grip {
  display: flex;
  align-items: center;
  justify-content: center;
  height: 24px;
  margin: 1px 2px 5px 0;
  border-top: 2px solid #b3c0c4;
  border-bottom: 1px solid #c8c8c8;
  box-shadow: inset 0 3px 0 #f6f6f6, inset 0 4px 0 #c4c4c4;
}
.dot {
  width: 8px;
  height: 8px;
  border: 1px solid #888;
  border-radius: 50%;
  background: #ddd;
}
.grip .dot {
  margin-top: 8px;
}
.panel-tabs {
  display: flex;
  margin: 3px 7px 0 2px;
  border-top: 1px solid #7f7f7f;
}
.panel-tabs button {
  flex: 1;
  height: 37px;
  border-right: 1px solid #7f7f7f;
  border-bottom: 1px solid #7f7f7f;
  background: #d3d3d3;
}
.panel-tabs .active {
  border-bottom-color: #f6f6f6;
  background: #f6f6f6;
}
.panel-tabs svg {
  width: 28px;
  height: 28px;
}
.filter {
  display: flex;
  align-items: center;
  height: 36px;
  margin: 0 5px;
  padding-left: 4px;
  border: 1px solid #c3c3c3;
}
.filter svg {
  width: 28px;
  height: 28px;
}
.root,
.tree li {
  display: flex;
  align-items: center;
  height: 32px;
  overflow: hidden;
  white-space: nowrap;
}
.root {
  margin-top: 1px;
  padding-left: 6px;
}
.root-part {
  flex: none;
  width: 28px;
  height: 28px;
}
.root-hat {
  flex: none;
  width: 30px;
  height: 28px;
  margin: 0 5px 0 6px;
}
.tree {
  margin: 0;
  padding: 0;
  list-style: none;
}
.arrow {
  display: flex;
  flex: none;
  width: 25px;
  padding-left: 15px;
}
.arrow svg {
  width: 6px;
  height: 11px;
}
.node {
  flex: none;
  width: 28px;
  height: 28px;
  margin-right: 6px;
}
.rollback {
  height: 4px;
  margin: -1px 2px 0 1px;
  border-bottom: 1px solid #2424a8;
  background: #3790c8;
}
.hscroll {
  height: 11px;
  margin: auto 2px 3px 1px;
  padding: 8px 0 7px 26px;
  border-top: 1px solid #fff;
  border-bottom: 1px solid #c4c4c4;
  background: #efefef;
}
.thumb {
  width: 141px;
  height: 11px;
  background: #858585;
}

.view {
  grid-area: 1 / 2 / 3 / 3;
  position: relative;
  overflow: hidden;
  border-right: 1px solid #9aa3a8;
  background:
    radial-gradient(ellipse 32% 40% at 76% 8%, #dce1eb, rgba(226, 230, 238, 0.6) 45%, rgba(255, 255, 255, 0)),
    radial-gradient(ellipse 32% 32% at 100% 37%, #d9dbe9, rgba(219, 222, 234, 0.7) 45%, rgba(219, 222, 234, 0)),
    radial-gradient(ellipse 30% 30% at 96% 100%, #f2f3f8, rgba(255, 255, 255, 0)),
    linear-gradient(#fff 0 20%, #f5f6fa 36%, #e6e8f1 46%, #e0e3ed 53%, #f3f4f7 62%, #fff 71% 90%, #f9fafc);
}
.model {
  position: absolute;
  width: 100%;
  height: 100%;
}
.triad {
  position: absolute;
  left: 4px;
  bottom: 20px;
  width: 70px;
  height: 85px;
  font: 12px "Liberation Sans", sans-serif;
}
.hud {
  position: relative;
  display: flex;
  justify-content: center;
  gap: 10px;
  padding: 7px 2px 0 0;
}
.hud-item {
  display: flex;
}
.hud-drop {
  width: 15px;
  justify-content: flex-end;
  color: #999;
}
.hud-drop svg {
  width: 7px;
  height: 5px;
}
.doc-window {
  position: absolute;
  top: 10px;
  right: 12px;
  display: flex;
  gap: 14px;
  color: #9b9b9b;
}
.task-pane {
  position: absolute;
  top: 76px;
  right: 0;
  border: 1px solid #7f7f7f;
  border-right: 0;
}
.task-pane button {
  width: 38px;
  height: 36px;
  border-bottom: 1px solid #7f7f7f;
  background: #d3d3d3;
}
.task-pane button:last-child {
  border-bottom: 0;
}
.task-pane .active {
  background: #f6f6f6;
}
.task-pane svg {
  width: 30px;
  height: 28px;
}
.splitter {
  position: absolute;
  top: 456px;
  left: -1px;
  width: 14px;
  height: 59px;
  padding-right: 2px;
  border: 1px solid #7f7f7f;
  border-left: 0;
  background: #f6f6f6;
}

.sheets {
  display: flex;
  height: 25px;
  border-top: 1px solid #7f7f7f;
  border-bottom: 1px solid #7f7f7f;
  font-size: 18px;
}
.sheet-nav {
  display: flex;
  padding-left: 2px;
}
.sheet-nav button {
  box-sizing: border-box;
  width: 24px;
  border: 1px solid #85859b;
  background: #a9a9bf;
}
.sheet-nav svg {
  width: 22px;
  height: 22px;
}
.sheet {
  border-right: 1px solid #7f7f7f;
}
.current {
  width: 99px;
  padding-left: 6px;
  font-weight: 700;
}
.study {
  width: 238px;
  padding-right: 10px;
  background: #d3d3d3;
}
.status {
  display: flex;
  align-items: center;
  box-sizing: border-box;
  height: 26px;
  padding: 3px 4px 0 1px;
}
.edition {
  flex: 1;
}
.mode {
  width: 251px;
}
.units {
  width: 105px;
  justify-content: space-between;
}
.units svg {
  width: 6px;
  height: 4px;
}
.tag {
  margin-left: 31px;
}
.tag svg {
  width: 28px;
  height: 24px;
}
</style>
